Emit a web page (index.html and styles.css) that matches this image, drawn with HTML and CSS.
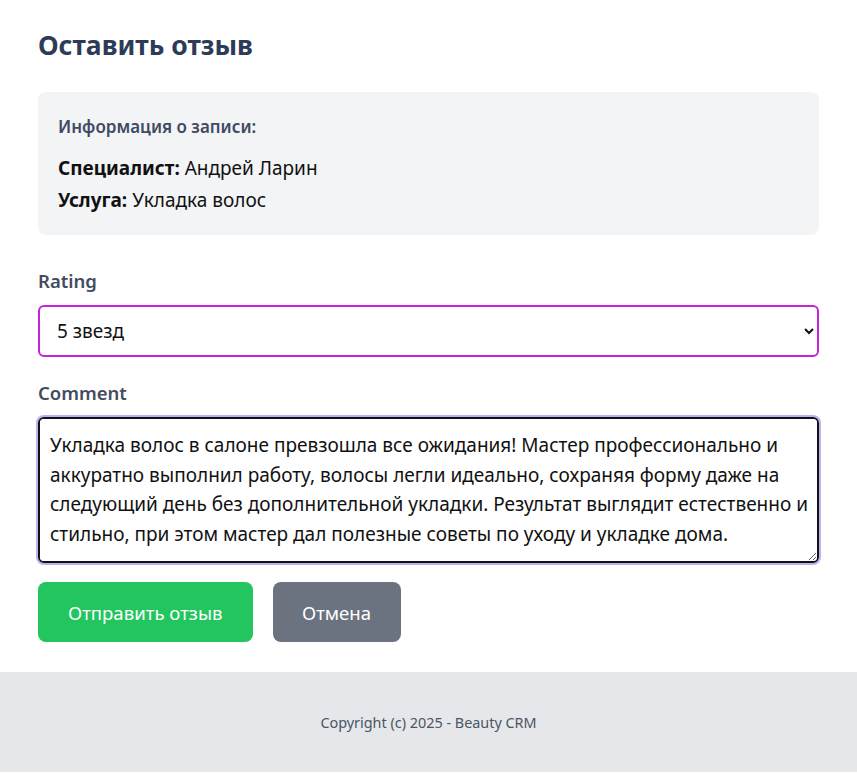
FILE: index.html
```html
<!DOCTYPE html>
<html lang="ru">
<head>
<meta charset="utf-8">
<title>Оставить отзыв</title>
<link rel="stylesheet" href="styles.css">
</head>
<body>
<main class="page">
  <h1 class="title">Оставить отзыв</h1>
  <section class="info">
    <h2 class="info-title">Информация о записи:</h2>
    <p class="info-row"><strong>Специалист:</strong> Андрей Ларин</p>
    <p class="info-row"><strong>Услуга:</strong> Укладка волос</p>
  </section>
  <form class="form">
    <div class="field">
      <label class="label" for="rating">Rating</label>
      <select id="rating" class="select">
        <option>5 звезд</option>
        <option>4 звезды</option>
        <option>3 звезды</option>
        <option>2 звезды</option>
        <option>1 звезда</option>
      </select>
    </div>
    <div class="field field-comment">
      <label class="label" for="comment">Comment</label>
      <textarea id="comment" class="textarea" rows="4">Укладка волос в салоне превзошла все ожидания! Мастер профессионально и аккуратно выполнил работу, волосы легли идеально, сохраняя форму даже на следующий день без дополнительной укладки. Результат выглядит естественно и стильно, при этом мастер дал полезные советы по уходу и укладке дома.</textarea>
    </div>
    <div class="actions">
      <button type="button" class="btn btn-submit">Отправить отзыв</button>
      <button type="button" class="btn btn-cancel">Отмена</button>
    </div>
  </form>
</main>
<footer class="footer">Copyright (c) 2025 - Beauty CRM</footer>
</body>
</html>
```
FILE: styles.css
```css
* { box-sizing: border-box; }
html, body { margin: 0; padding: 0; }
body {
  font-family: "Noto Sans", "Open Sans", sans-serif;
  color: #111;
  background: #fff;
}
.page {
  padding: 26px 38px 30px;
}
.title {
  margin: 0 0 28px;
  font-size: 26.5px;
  line-height: 38px;
  font-weight: 700;
  color: #2c3b58;
}
.info {
  background: #f3f4f6;
  border-radius: 8px;
  padding: 22px 20px 19px;
}
.info-title {
  margin: 0 0 12px;
  font-size: 17px;
  line-height: 26px;
  font-weight: 600;
  color: #3f4b63;
}
.info-row {
  margin: 0;
  font-size: 19px;
  line-height: 32px;
  color: #111;
}
.info-row strong { font-weight: 700; }
.form {
  margin-top: 33px;
  display: flex;
  flex-direction: column;
}
.field { display: flex; flex-direction: column; margin-bottom: 23px; }
.field-comment { margin-bottom: 19px; }
.label {
  font-size: 18.5px;
  line-height: 26px;
  font-weight: 600;
  color: #434c5e;
  margin-bottom: 11px;
}
.select {
  height: 52px;
  border: 2px solid #c026d3;
  border-radius: 6px;
  padding: 0 10px 0 13px;
  font-family: inherit;
  font-size: 19px;
  color: #111;
  background: #fff;
}
.textarea {
  height: 146px;
  border: 2px solid #111;
  border-radius: 6px;
  box-shadow: 0 0 0 2px #b6b3f4;
  padding: 12px 4px 12px 10px;
  font-family: inherit;
  font-size: 19px;
  line-height: 29.7px;
  color: #111;
  resize: vertical;
  outline: none;
}
.actions {
  display: flex;
  gap: 20px;
}
.btn {
  height: 60px;
  border: none;
  border-radius: 8px;
  padding: 0 30px;
  font-family: inherit;
  font-size: 18.6px;
  color: #fff;
  cursor: pointer;
}
.btn-submit { background: #22c55e; }
.btn-cancel { background: #6b7280; padding: 0 29.5px; }
.footer {
  background: #e5e7eb;
  height: 100px;
  display: flex;
  align-items: center;
  justify-content: center;
  font-size: 14.4px;
  color: #4b5563;
}
```
